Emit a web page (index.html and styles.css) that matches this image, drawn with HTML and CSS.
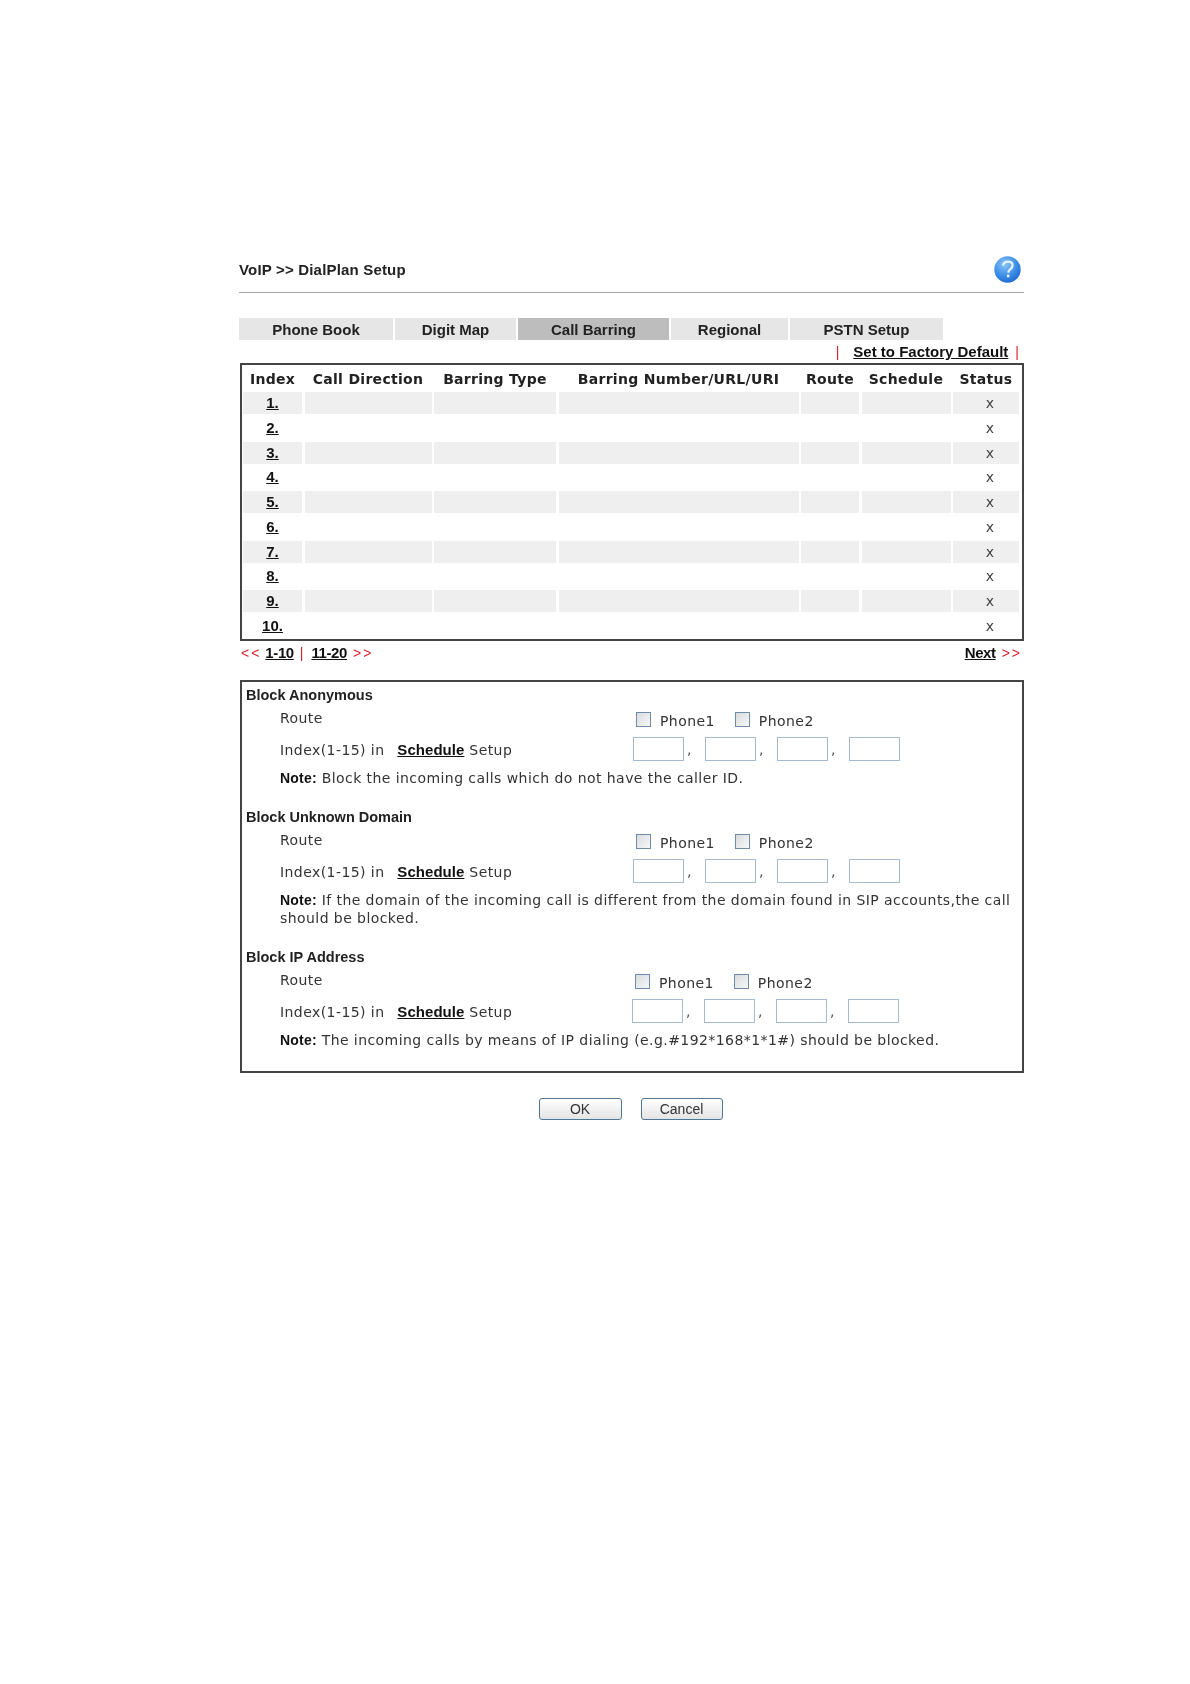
FILE: index.html
```html
<!DOCTYPE html>
<html lang="en">
<head>
<meta charset="utf-8">
<title>VoIP DialPlan Setup</title>
<link rel="stylesheet" href="styles.css">
</head>
<body>
<main class="page">
  <header class="title-bar">
    <h1 class="title">VoIP &gt;&gt; DialPlan Setup</h1>
    <svg class="help" viewBox="0 0 27 27" aria-label="Help">
      <defs>
        <radialGradient id="helpFill" cx="0.4" cy="0.3" r="0.8">
          <stop offset="0" stop-color="#8cc4f7"/>
          <stop offset="0.55" stop-color="#3c8ee8"/>
          <stop offset="1" stop-color="#1a62cf"/>
        </radialGradient>
      </defs>
      <circle cx="13.5" cy="13.5" r="13.2" fill="url(#helpFill)"/>
      <path d="M9 9.6c.5-2.6 2.4-4 4.9-4 2.8 0 4.7 1.6 4.7 3.9 0 1.9-1 2.9-2.4 3.9-1.3.9-1.8 1.6-1.8 3.3" fill="none" stroke="#e6f1fc" stroke-width="2.3"/>
      <rect x="12.9" y="18.6" width="2.5" height="2.7" fill="#e6f1fc"/>
    </svg>
  </header>

  <nav class="tabs">
    <a class="tab tab-phone">Phone Book</a>
    <a class="tab tab-digit">Digit Map</a>
    <a class="tab tab-call active">Call Barring</a>
    <a class="tab tab-regional">Regional</a>
    <a class="tab tab-pstn">PSTN Setup</a>
  </nav>

  <div class="factory">
    <span class="sep">|</span>
    <a class="link">Set to Factory Default</a>
    <span class="sep">|</span>
  </div>

  <section class="list">
    <div class="row head">
      <div>Index</div><div>Call Direction</div><div>Barring Type</div><div>Barring Number/URL/URI</div><div>Route</div><div>Schedule</div><div>Status</div>
    </div>
    <div class="row odd"><div><a class="link">1.</a></div><div></div><div></div><div></div><div></div><div></div><div class="st">x</div></div>
    <div class="row"><div><a class="link">2.</a></div><div></div><div></div><div></div><div></div><div></div><div class="st">x</div></div>
    <div class="row odd"><div><a class="link">3.</a></div><div></div><div></div><div></div><div></div><div></div><div class="st">x</div></div>
    <div class="row"><div><a class="link">4.</a></div><div></div><div></div><div></div><div></div><div></div><div class="st">x</div></div>
    <div class="row odd"><div><a class="link">5.</a></div><div></div><div></div><div></div><div></div><div></div><div class="st">x</div></div>
    <div class="row"><div><a class="link">6.</a></div><div></div><div></div><div></div><div></div><div></div><div class="st">x</div></div>
    <div class="row odd"><div><a class="link">7.</a></div><div></div><div></div><div></div><div></div><div></div><div class="st">x</div></div>
    <div class="row"><div><a class="link">8.</a></div><div></div><div></div><div></div><div></div><div></div><div class="st">x</div></div>
    <div class="row odd"><div><a class="link">9.</a></div><div></div><div></div><div></div><div></div><div></div><div class="st">x</div></div>
    <div class="row"><div><a class="link">10.</a></div><div></div><div></div><div></div><div></div><div></div><div class="st">x</div></div>
  </section>

  <div class="pager">
    <div class="pager-left">
      <span class="sep">&lt;&lt;</span>
      <a class="link first">1-10</a>
      <span class="sep">|</span>
      <a class="link">11-20</a>
      <span class="sep">&gt;&gt;</span>
    </div>
    <div class="pager-right">
      <a class="link">Next</a>
      <span class="sep">&gt;&gt;</span>
    </div>
  </div>

  <section class="blocks">
    <div class="block">
      <h2 class="block-title">Block Anonymous</h2>
      <div class="field route">
        <span class="label">Route</span>
        <div class="phones">
          <label class="phone"><input type="checkbox" class="check">Phone1</label>
          <label class="phone"><input type="checkbox" class="check">Phone2</label>
        </div>
      </div>
      <div class="field">
        <span class="label">Index(1-15) in <a class="link sched">Schedule</a> Setup</span>
        <div class="indexes">
          <input class="num" type="text"><span class="comma">,</span>
          <input class="num" type="text"><span class="comma">,</span>
          <input class="num" type="text"><span class="comma">,</span>
          <input class="num" type="text">
        </div>
      </div>
      <p class="note"><b>Note:</b> Block the incoming calls which do not have the caller ID.</p>
    </div>

    <div class="block">
      <h2 class="block-title">Block Unknown Domain</h2>
      <div class="field route">
        <span class="label">Route</span>
        <div class="phones">
          <label class="phone"><input type="checkbox" class="check">Phone1</label>
          <label class="phone"><input type="checkbox" class="check">Phone2</label>
        </div>
      </div>
      <div class="field">
        <span class="label">Index(1-15) in <a class="link sched">Schedule</a> Setup</span>
        <div class="indexes">
          <input class="num" type="text"><span class="comma">,</span>
          <input class="num" type="text"><span class="comma">,</span>
          <input class="num" type="text"><span class="comma">,</span>
          <input class="num" type="text">
        </div>
      </div>
      <p class="note"><b>Note:</b> If the domain of the incoming call is different from the domain found in SIP accounts,the call should be blocked.</p>
    </div>

    <div class="block last">
      <h2 class="block-title">Block IP Address</h2>
      <div class="field route">
        <span class="label">Route</span>
        <div class="phones">
          <label class="phone"><input type="checkbox" class="check">Phone1</label>
          <label class="phone"><input type="checkbox" class="check">Phone2</label>
        </div>
      </div>
      <div class="field">
        <span class="label">Index(1-15) in <a class="link sched">Schedule</a> Setup</span>
        <div class="indexes">
          <input class="num" type="text"><span class="comma">,</span>
          <input class="num" type="text"><span class="comma">,</span>
          <input class="num" type="text"><span class="comma">,</span>
          <input class="num" type="text">
        </div>
      </div>
      <p class="note"><b>Note:</b> The incoming calls by means of IP dialing (e.g.#192*168*1*1#) should be blocked.</p>
    </div>
  </section>

  <div class="actions">
    <button class="btn btn-ok" type="button">OK</button>
    <button class="btn btn-cancel" type="button">Cancel</button>
  </div>
</main>
</body>
</html>
```

FILE: styles.css
```css
* { box-sizing: border-box; }
html, body { margin: 0; background: #fff; }
body {
  height: 1684px;
  overflow: hidden;
  color: #222;
  font-family: "DejaVu Sans", Verdana, sans-serif;
}
.page { width: 785px; margin-left: 239px; padding-top: 254px; filter: blur(.3px); }

.title-bar {
  display: flex; justify-content: space-between; align-items: center;
  height: 39px; padding-right: 3px;
  border-bottom: 1px solid #a8a8a8;
  padding-bottom: 7px;
}
.title {
  margin: 0;
  font: bold 15px/18px "Liberation Sans", Arial, sans-serif;
  letter-spacing: .18px;
}
.help { width: 27px; height: 27px; flex: none; }

.tabs { display: flex; gap: 2px; margin-top: 25px; height: 22px; }
.tab {
  display: flex; align-items: center; justify-content: center;
  background: #e6e6e6;
  font: bold 15px "Liberation Sans", Arial, sans-serif;
}
.tab-phone { width: 154px; }
.tab-digit { width: 121px; }
.tab-call { width: 151px; }
.tab-regional { width: 117px; }
.tab-pstn { width: 153px; }
.tab.active { background: #bdbdbd; }

.factory {
  display: flex; justify-content: flex-end; align-items: center;
  height: 23px; padding-right: 3px; gap: 12px;
}
.factory .sep + .link { margin-right: -5px; }
.link {
  color: #111;
  font: bold 15px "Liberation Sans", Arial, sans-serif;
  text-decoration: underline;
}
.sep {
  color: #d8232a;
  font: 14px "Liberation Sans", Arial, sans-serif;
  letter-spacing: 2px;
}

.list {
  margin-left: 1px;
  height: 278px;
  border: 2px solid #444;
  padding: 0 1px;
}
.row {
  display: grid;
  grid-template-columns: 59px 127px 122px 240px 58px 89px 66px;
  column-gap: 2.5px;
  height: 22px;
  margin-bottom: 2.75px;
  text-align: center;
  font-size: 14px;
  line-height: 22px;
}
.row.head {
  height: 27px;
  margin-bottom: 0;
  font-size: 14px;
  font-weight: bold;
  line-height: 28px;
  letter-spacing: .3px;
  white-space: nowrap;
}
.row.odd > div { background: #efefef; }
.st { padding-left: 8px; color: #444; font-size: 14px; }

.pager {
  display: flex; justify-content: space-between; align-items: center;
  height: 23px; padding: 0 2px 0 2px;
}
.pager-left, .pager-right { display: flex; align-items: center; gap: 6px; }
.pager .link { letter-spacing: -.4px; }
.pager .first { margin-left: -2px; }

.blocks {
  margin-top: 16px;
  margin-left: 1px;
  height: 393px;
  border: 2px solid #444;
  padding: 1px 11px 0 4px;
}
.block { margin-bottom: 18.5px; }
.block-title {
  margin: 0;
  height: 24px;
  font: bold 14.5px/24px "Liberation Sans", Arial, sans-serif;
}
.field {
  display: grid;
  grid-template-columns: 353px 1fr;
  align-items: center;
  height: 32px;
  padding-left: 34px;
  font-size: 14px;
  letter-spacing: .43px;
  color: #333;
}
.field.route { height: 26px; }
.route .label { position: relative; top: -2px; }
.sched { margin: 0 0 0 8px; letter-spacing: .05px; }
.phones { display: flex; gap: 20px; padding: 2px 0 0 3px; }
.phone { display: flex; align-items: center; gap: 9px; line-height: 18px; }
.check {
  appearance: none;
  width: 15px; height: 15px; margin: 0;
  position: relative; top: -2px;
  border: 1px solid #6f8ba8;
  background: linear-gradient(135deg, #d8dbde, #f8f8f8);
}
.indexes { display: flex; align-items: center; }
.num {
  width: 51px; height: 24px; padding: 0;
  border: 1px solid #a6bad0;
  border-radius: 0;
  background: #fff;
}
.comma { width: 21px; padding-left: 3px; font-size: 14px; line-height: 24px; color: #555; }
.last .phones, .last .indexes { margin-left: -1px; }
.note {
  margin: 3.5px 0 0;
  padding-left: 34px;
  font-size: 14px;
  letter-spacing: .43px;
  line-height: 18px;
  color: #333;
}
.note b { color: #111; font-family: "Liberation Sans", Arial, sans-serif; letter-spacing: .2px; }

.actions { display: flex; justify-content: center; gap: 19px; margin-top: 25px; padding-right: 2px; }
.btn {
  height: 22px; padding: 0;
  border: 1px solid #4f7694;
  border-radius: 3px;
  background: linear-gradient(#ffffff, #e4e4e4);
  color: #333;
  font: 14px "Liberation Sans", Arial, sans-serif;
}
.btn-ok { width: 83px; }
.btn-cancel { width: 82px; }
```
